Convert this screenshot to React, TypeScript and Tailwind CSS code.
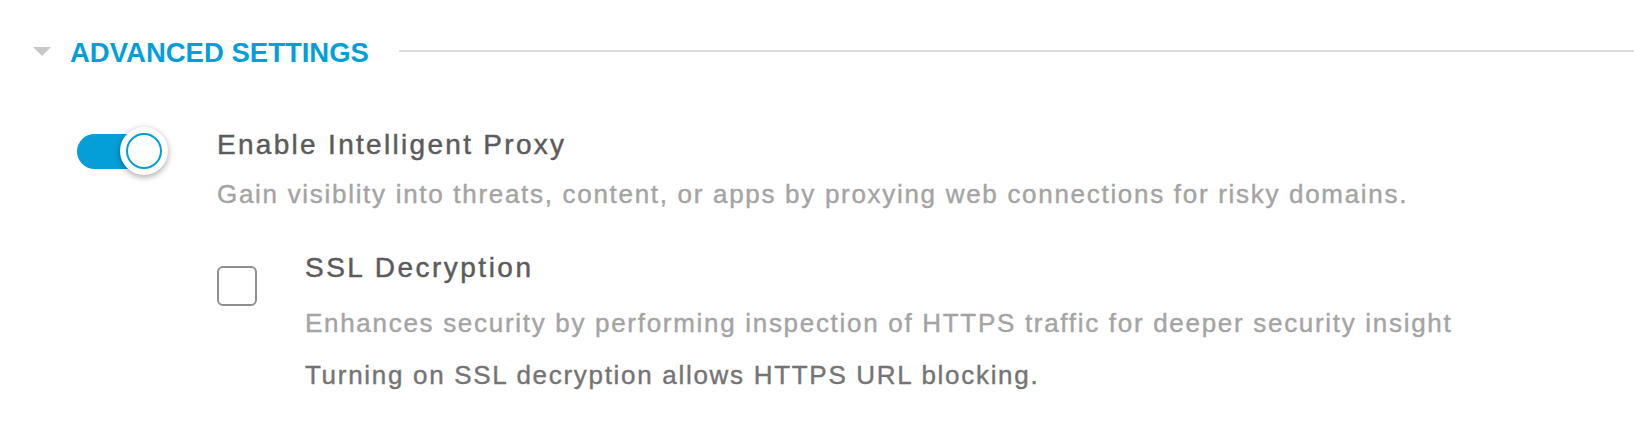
import { useState } from 'react';

const Toggle = ({ on, onChange }: { on: boolean; onChange: () => void }) => {
  return (
    <button
      type="button"
      onClick={onChange}
      className="relative w-[91px] h-[48px] shrink-0"
    >
      <span
        className={
          'absolute left-0 top-[7px] h-[35px] w-[78px] rounded-full ' +
          (on ? 'bg-[#049fd9]' : 'bg-[#c6c7ca]')
        }
      ></span>
      <span className="absolute right-0 top-0 w-[48px] h-[48px] rounded-full bg-white shadow-[0_2px_6px_rgba(0,0,0,0.35)] flex items-center justify-center">
        <span className="w-[36px] h-[36px] rounded-full border-2 border-[#049fd9]"></span>
      </span>
    </button>
  );
};

export default function App() {
  const [proxy, setProxy] = useState(true);
  const [ssl, setSsl] = useState(false);

  return (
    <div className="w-full h-[446px] bg-white font-['Liberation_Sans',Arial,sans-serif] overflow-hidden">
      {/* section header */}
      <div className="flex items-center pt-[39px] pl-[33px]">
        <svg width="18" height="9" viewBox="0 0 18 9" className="mt-[-2px]">
          <polygon points="0,0 18,0 9,9" fill="#c8c8c8" />
        </svg>
        <h2 className="ml-[19px] text-[27.5px] leading-[27px] font-bold text-[#049fd9]">
          ADVANCED SETTINGS
        </h2>
        <div className="flex-1 ml-[30px] h-[2px] bg-[#dcdcdc] mt-[-3px]"></div>
      </div>

      <div className="flex items-start pl-[77px] pt-[61px] gap-[49px]">
        <Toggle on={proxy} onChange={() => setProxy(!proxy)} />
        <div className="pt-[4px]">
          <div className="text-[28px] leading-[28px] tracking-[2.3px] text-[#5b5b5b] [-webkit-text-stroke:0.45px_#5b5b5b]">
            Enable Intelligent Proxy
          </div>
          <div className="mt-[22px] text-[26px] leading-[26px] tracking-[1.7px] text-[#a4a4a4] [-webkit-text-stroke:0.4px_#a4a4a4]">
            Gain visiblity into threats, content, or apps by proxying web connections for risky domains.
          </div>

          <div className="flex items-start mt-[47px] gap-[48px]">
            <button
              type="button"
              onClick={() => setSsl(!ssl)}
              className="mt-[12px] w-[40px] h-[40px] shrink-0 rounded-[6px] border-2 border-[#8e8e8e] bg-white"
            ></button>
            <div>
              <div className="text-[28px] leading-[28px] tracking-[2.5px] text-[#5b5b5b] [-webkit-text-stroke:0.45px_#5b5b5b]">
                SSL Decryption
              </div>
              <div className="mt-[28px] text-[26px] leading-[26px] tracking-[1.7px] text-[#a4a4a4] [-webkit-text-stroke:0.4px_#a4a4a4]">
                Enhances security by performing inspection of HTTPS traffic for deeper security insight
              </div>
              <div className="mt-[26px] text-[26px] leading-[26px] tracking-[1.7px] text-[#747474] [-webkit-text-stroke:0.4px_#747474]">
                Turning on SSL decryption allows HTTPS URL blocking.
              </div>
            </div>
          </div>
        </div>
      </div>
    </div>
  );
}
